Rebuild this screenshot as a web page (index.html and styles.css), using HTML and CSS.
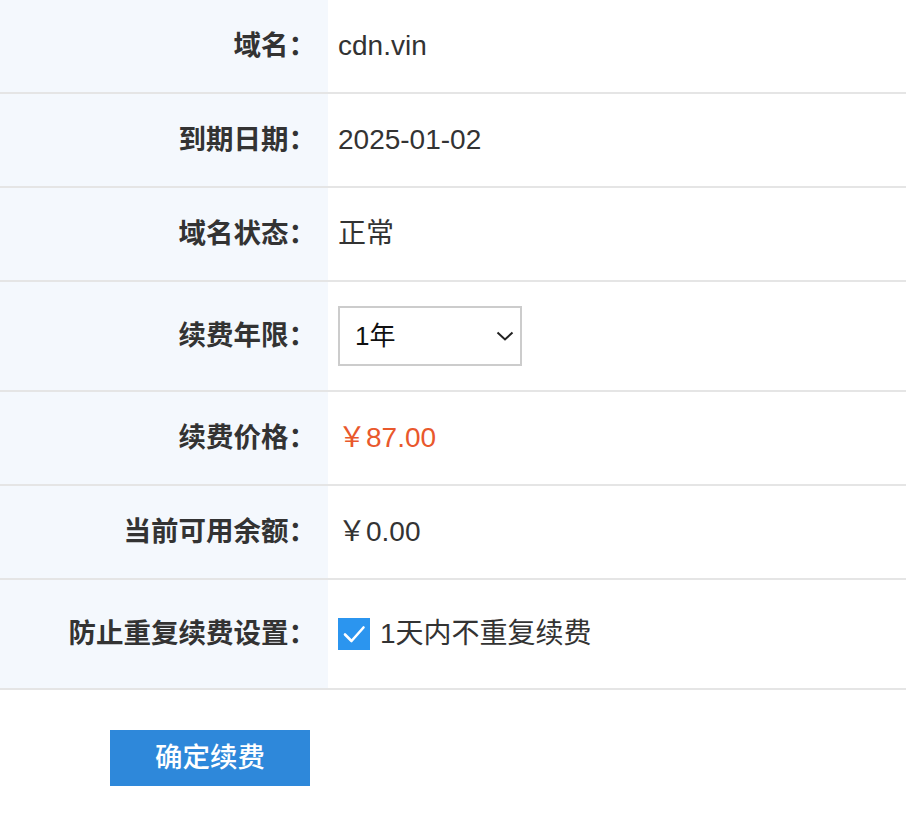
FILE: index.html
```html
<!DOCTYPE html>
<html lang="zh-CN">
<head>
<meta charset="utf-8">
<title>域名续费</title>
<link rel="stylesheet" href="styles.css">
</head>
<body>
<div class="form">
  <div class="row">
    <div class="label">域名：</div>
    <div class="value">cdn.vin</div>
  </div>
  <div class="row">
    <div class="label">到期日期：</div>
    <div class="value">2025-01-02</div>
  </div>
  <div class="row">
    <div class="label">域名状态：</div>
    <div class="value">正常</div>
  </div>
  <div class="row tall">
    <div class="label">续费年限：</div>
    <div class="value">
      <div class="select-wrap">
        <select class="select">
          <option>1年</option>
          <option>2年</option>
          <option>3年</option>
        </select>
        <svg class="chevron" width="18" height="12" viewBox="0 0 18 12"><path d="M1.5 2.5 L9 9.5 L16.5 2.5" fill="none" stroke="#222" stroke-width="2"/></svg>
      </div>
    </div>
  </div>
  <div class="row">
    <div class="label">续费价格：</div>
    <div class="value price">￥87.00</div>
  </div>
  <div class="row">
    <div class="label">当前可用余额：</div>
    <div class="value">￥0.00</div>
  </div>
  <div class="row tall">
    <div class="label">防止重复续费设置：</div>
    <div class="value">
      <label class="check">
        <span class="box"><svg width="32" height="32" viewBox="0 0 32 32"><path d="M7 16.5 L13.5 23 L25.5 9.5" fill="none" stroke="#fff" stroke-width="2.6" stroke-linecap="round" stroke-linejoin="round"/></svg></span>
        <span class="check-text">1天内不重复续费</span>
      </label>
    </div>
  </div>
</div>
<div class="actions">
  <button class="btn">确定续费</button>
</div>
</body>
</html>
```

FILE: styles.css
```css
html, body {
  margin: 0;
  padding: 0;
  background: #fff;
}
body {
  font-family: "Liberation Sans", "Noto Sans CJK SC", sans-serif;
  color: #333;
  font-size: 28px;
}
.form {
  display: flex;
  flex-direction: column;
}
.row {
  display: grid;
  grid-template-columns: 328px 1fr;
  height: 92px;
  border-bottom: 2px solid #e5e5e5;
}
.row.tall {
  height: 108px;
}
.label {
  background: #f4f8fd;
  font-weight: bold;
  font-size: 27.5px;
  text-align: right;
  padding-right: 12px;
  display: flex;
  align-items: center;
  justify-content: flex-end;
  line-height: 40px;
}
.value {
  padding-left: 10px;
  display: flex;
  align-items: center;
  line-height: 40px;
}
.price {
  color: #e9582c;
}
.select-wrap {
  position: relative;
  width: 184px;
  height: 60px;
}
.select {
  appearance: none;
  -webkit-appearance: none;
  width: 184px;
  height: 60px;
  box-sizing: border-box;
  border: 2px solid #cccccc;
  border-radius: 0;
  background: #fff;
  font-family: "Liberation Sans", "Noto Sans CJK SC", sans-serif;
  font-size: 26px;
  color: #111;
  padding: 0 0 0 15px;
  margin: 0;
}
.chevron {
  position: absolute;
  right: 8px;
  top: 24px;
}
.check {
  display: flex;
  align-items: center;
  gap: 10px;
}
.box {
  width: 32px;
  height: 32px;
  background: #2b95ef;
  display: block;
}
.box svg {
  display: block;
}
.actions {
  padding: 40px 0 0 110px;
}
.btn {
  width: 200px;
  height: 56px;
  border: none;
  background: #2e88da;
  color: #fff;
  font-family: "Liberation Sans", "Noto Sans CJK SC", sans-serif;
  font-size: 27.5px;
  font-weight: 500;
  padding: 0;
  margin: 0;
  line-height: 56px;
}
```
